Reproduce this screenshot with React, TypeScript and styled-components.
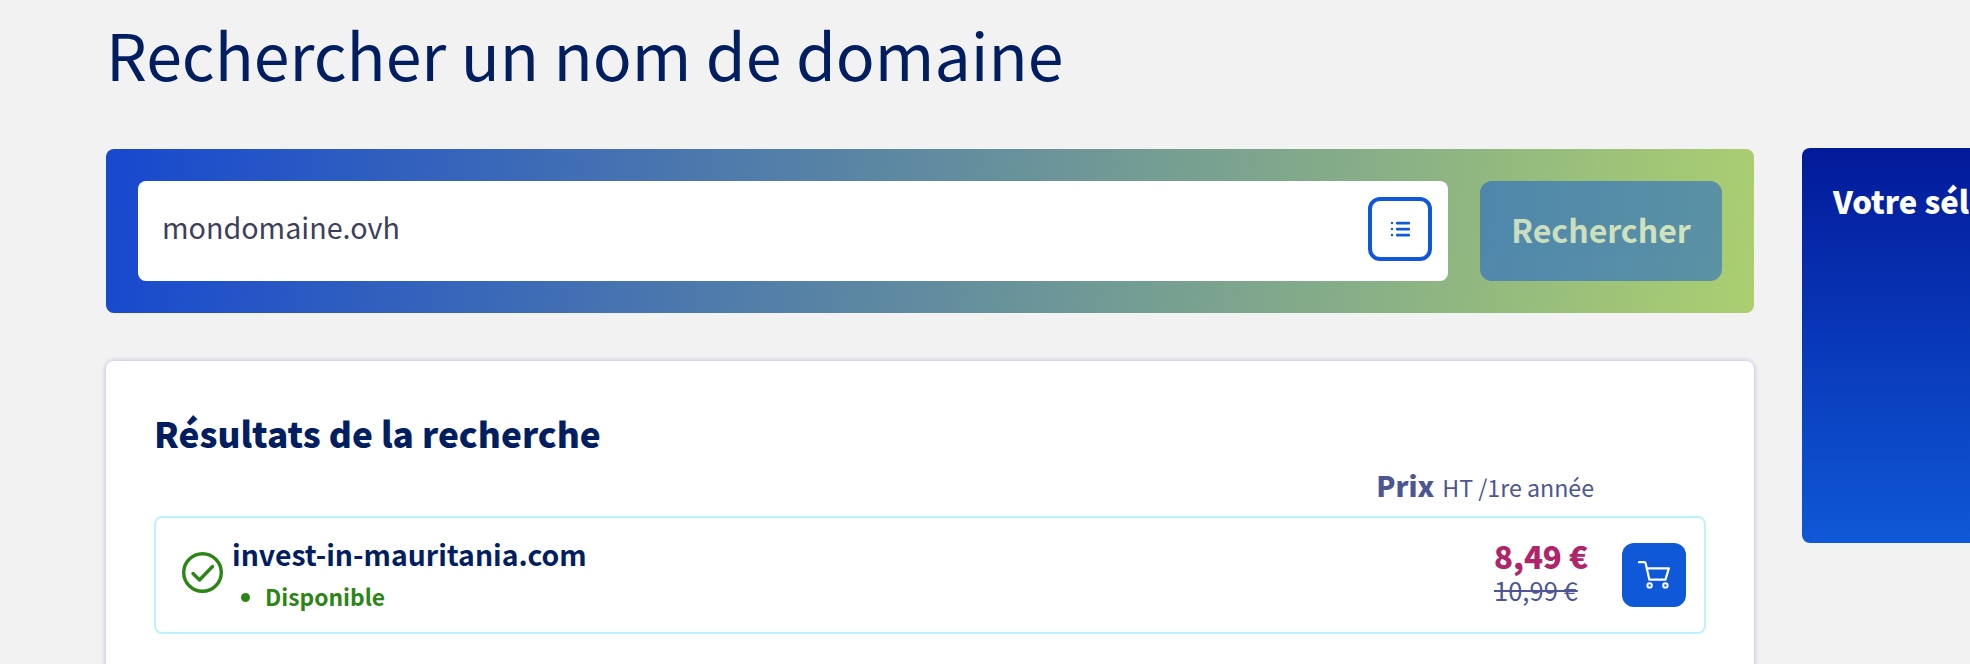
import styled, { createGlobalStyle } from "styled-components";

const GlobalStyle = createGlobalStyle`
  html, body {
    margin: 0;
    height: 664px;
    overflow: hidden;
    background: #f2f2f2;
    font-family: "Noto Sans CJK SC", "Noto Sans", sans-serif;
  }
  * { box-sizing: border-box; }
`;

export default function App() {
  return (
    <Page>
      <GlobalStyle />
      <Title>Rechercher un nom de domaine</Title>
      <Columns>
        <Main>
          <SearchBanner>
            <SearchField>
              <SearchValue>mondomaine.ovh</SearchValue>
              <ListButton aria-label="Liste">
                <ListIcon />
              </ListButton>
            </SearchField>
            <SearchButton>Rechercher</SearchButton>
          </SearchBanner>
          <ResultsCard>
            <ResultsTitle>Résultats de la recherche</ResultsTitle>
            <PriceHeader>
              <strong>Prix</strong> HT /1re année
            </PriceHeader>
            <ResultRow>
              <CheckIcon />
              <DomainInfo>
                <DomainName>invest-in-mauritania.com</DomainName>
                <StatusList>
                  <li>Disponible</li>
                </StatusList>
              </DomainInfo>
              <PriceBlock>
                <Price>8,49 €</Price>
                <OldPrice>10,99 €</OldPrice>
              </PriceBlock>
              <CartButton aria-label="Ajouter au panier">
                <CartIcon />
              </CartButton>
            </ResultRow>
          </ResultsCard>
        </Main>
        <Sidebar>
          <SidebarTitle>Votre sélection</SidebarTitle>
        </Sidebar>
      </Columns>
    </Page>
  );
}

function ListIcon() {
  return (
    <svg width="20" height="16" viewBox="0 0 20 16" fill="none">
      <g fill="#0f58d7">
        <circle cx="2" cy="2" r="1.2" />
        <circle cx="2" cy="8" r="1.2" />
        <circle cx="2" cy="14" r="1.2" />
        <rect x="6" y="0.8" width="14" height="2.6" rx="1" />
        <rect x="6" y="6.8" width="14" height="2.6" rx="1" />
        <rect x="6" y="12.8" width="14" height="2.6" rx="1" />
      </g>
    </svg>
  );
}

function CheckIcon() {
  return (
    <StatusIcon width="41" height="41" viewBox="0 0 41 41" fill="none">
      <circle cx="20.5" cy="20.5" r="18.8" stroke="#2b8616" strokeWidth="3.4" />
      <path
        d="M11 21.5l6.5 6.5L30.5 14.5"
        stroke="#2b8616"
        strokeWidth="3.4"
        strokeLinecap="round"
        strokeLinejoin="round"
      />
    </StatusIcon>
  );
}

function CartIcon() {
  return (
    <svg width="32" height="28" viewBox="0 0 32 28" fill="none">
      <path
        d="M1 1.2h5.2c.8 0 1.3.4 1.5 1.2l3.6 16.2h16.2L30.8 7.4H8.6"
        stroke="#fff"
        strokeWidth="2.2"
        strokeLinecap="round"
        strokeLinejoin="round"
      />
      <circle cx="11.6" cy="24.4" r="2.2" stroke="#fff" strokeWidth="2" />
      <circle cx="27.4" cy="24.4" r="2.2" stroke="#fff" strokeWidth="2" />
    </svg>
  );
}

const Page = styled.div`
  padding-left: 106px;
  height: 664px;
  overflow: hidden;
`;

const Title = styled.h1`
  margin: 0;
  height: 149px;
  padding-top: 8px;
  font-size: 64.4px;
  line-height: 90px;
  font-weight: 400;
  color: #011e60;
`;

const Columns = styled.div`
  display: grid;
  grid-template-columns: 1648px 1fr;
  gap: 48px;
  align-items: start;
`;

const Main = styled.main`
  display: flex;
  flex-direction: column;
  gap: 48px;
`;

const SearchBanner = styled.div`
  display: flex;
  gap: 32px;
  height: 164px;
  padding: 32px;
  border-radius: 8px;
  background: linear-gradient(97deg, #1748cf 0%, #abcf70 100%);
`;

const SearchField = styled.div`
  flex: 1;
  display: flex;
  align-items: center;
  justify-content: space-between;
  padding: 0 16px 4px 24px;
  border-radius: 8px;
  background: #fff;
`;

const SearchValue = styled.span`
  padding-bottom: 4px;
  font-size: 28.7px;
  line-height: 40px;
  color: #3d3f5a;
`;

const ListButton = styled.button`
  display: flex;
  align-items: center;
  justify-content: center;
  width: 64px;
  height: 64px;
  padding: 0;
  border: 4px solid #0f58d7;
  border-radius: 12px;
  background: #fff;
`;

const SearchButton = styled.button`
  width: 242px;
  padding: 0 0 4px;
  border: 0;
  border-radius: 12px;
  background: #0f58d7;
  opacity: 0.5;
  color: #fff;
  font-family: inherit;
  font-size: 32px;
  font-weight: 700;
`;

const ResultsCard = styled.section`
  padding: 48px 48px 40px;
  height: 400px;
  border-radius: 8px;
  background: #fff;
  box-shadow: 0 0 4px 1px #c4c4e6;
`;

const ResultsTitle = styled.h2`
  margin: 0;
  font-size: 35.2px;
  line-height: 48px;
  font-weight: 900;
  color: #011e60;
`;

const PriceHeader = styled.div`
  display: flex;
  justify-content: flex-end;
  align-items: baseline;
  gap: 8px;
  padding-right: 112px;
  margin-top: 8px;
  font-size: 23.2px;
  line-height: 40px;
  color: #4d5693;

  strong {
    font-size: 28px;
    font-weight: 900;
  }
`;

const ResultRow = styled.div`
  display: flex;
  align-items: center;
  height: 118px;
  margin-top: 9px;
  padding: 0 18px 0 26px;
  border: 2px solid #bdf1ff;
  border-radius: 8px;
`;

const StatusIcon = styled.svg`
  flex: none;
  margin-right: 9px;
  margin-bottom: 6px;
`;

const DomainInfo = styled.div`
  flex: 1;
  display: flex;
  flex-direction: column;
  padding-bottom: 4px;
`;

const DomainName = styled.div`
  font-size: 28.4px;
  line-height: 40px;
  font-weight: 700;
  color: #011e60;
`;

const StatusList = styled.ul`
  margin: 7px 0 0;
  padding: 0 0 0 33px;
  font-size: 22.8px;
  line-height: 32px;
  font-weight: 700;
  color: #2b8616;
`;

const PriceBlock = styled.div`
  display: flex;
  flex-direction: column;
  margin-right: 34px;
  padding-bottom: 7px;
`;

const Price = styled.span`
  font-size: 31.2px;
  line-height: 36px;
  font-weight: 900;
  color: #ae2569;
`;

const OldPrice = styled.s`
  margin-top: 1px;
  font-size: 25.6px;
  line-height: 30px;
  color: #4d5693;
`;

const CartButton = styled.button`
  flex: none;
  display: flex;
  align-items: center;
  justify-content: center;
  width: 64px;
  height: 64px;
  padding: 0;
  border: 0;
  border-radius: 12px;
  background: #0f58d7;
`;

const Sidebar = styled.aside`
  width: 400px;
  height: 395px;
  margin-top: -1px;
  padding: 33px 31px;
  border-radius: 8px 0 0 8px;
  background: linear-gradient(180deg, #021a9a 0%, #0f58d7 100%);
`;

const SidebarTitle = styled.h2`
  margin: 0;
  font-size: 31px;
  line-height: 40px;
  font-weight: 900;
  color: #fff;
  white-space: nowrap;
`;
